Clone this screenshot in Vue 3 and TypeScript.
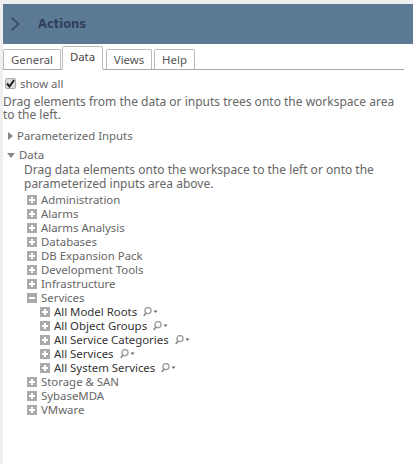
<script setup lang="ts">
const tabs = ['General', 'Data', 'Views', 'Help'];

type TreeNode = { label: string; open?: boolean; children?: string[] };

const nodes: TreeNode[] = [
  { label: 'Administration' },
  { label: 'Alarms' },
  { label: 'Alarms Analysis' },
  { label: 'Databases' },
  { label: 'DB Expansion Pack' },
  { label: 'Development Tools' },
  { label: 'Infrastructure' },
  {
    label: 'Services',
    open: true,
    children: ['All Model Roots', 'All Object Groups', 'All Service Categories', 'All Services', 'All System Services'],
  },
  { label: 'Storage & SAN' },
  { label: 'SybaseMDA' },
  { label: 'VMware' },
];
</script>

<template>
  <div class="panel">
    <header class="header">
      <svg class="chevron" width="12" height="16" viewBox="0 0 12 16">
        <path d="M2.5 1.5 L9.5 8 L2.5 14.5" fill="none" stroke="#2f3f52" stroke-width="1.3" />
      </svg>
      <span class="title">Actions</span>
    </header>

    <nav class="tabs">
      <button v-for="tab in tabs" :key="tab" :class="['tab', `tab--${tab.toLowerCase()}`]">{{ tab }}</button>
    </nav>

    <div class="body">
      <label class="show-all">
        <span class="check">
          <svg width="9" height="9" viewBox="0 0 9 9">
            <path d="M1 4.5 L3.5 7.5 L8 1.2" fill="none" stroke="#222" stroke-width="2" />
          </svg>
        </span>
        show all
      </label>
      <p class="hint">Drag elements from the data or inputs trees onto the workspace area to the left.</p>

      <div class="section section--closed">
        <span class="arrow arrow--right"></span>
        Parameterized Inputs
      </div>

      <div class="section">
        <span class="arrow arrow--down"></span>
        Data
      </div>
      <p class="hint hint--data">Drag data elements onto the workspace to the left or onto the parameterized inputs area above.</p>

      <ul class="tree">
        <li v-for="node in nodes" :key="node.label">
          <div class="row">
            <span class="toggle">
              <span class="toggle__h"></span>
              <span v-if="!node.open" class="toggle__v"></span>
            </span>
            {{ node.label }}
          </div>
          <ul v-if="node.children" class="tree tree--sub">
            <li v-for="child in node.children" :key="child" class="row row--child">
              <span class="toggle">
                <span class="toggle__h"></span>
                <span class="toggle__v"></span>
              </span>
              {{ child }}
              <svg class="search" width="15" height="10" viewBox="0 0 15 10">
                <circle cx="5" cy="3.6" r="3.1" fill="none" stroke="#a0a0a0" stroke-width="1.4" />
                <path d="M3 6 L0.8 9" stroke="#888" stroke-width="1.6" />
                <path d="M10.5 3.5 H14.5 L12.5 6 Z" fill="#666" />
              </svg>
            </li>
          </ul>
        </li>
      </ul>
    </div>
  </div>
</template>

<style>
html,
body {
  background: #fff;
}
</style>

<style scoped>
.panel {
  background: #fff;
  border-left: 3px solid #efefef;
  border-top: 4px solid #efefef;
  box-sizing: border-box;
  color: #666;
  font-family: 'Noto Sans', sans-serif;
  font-size: 11.4px;
  height: 464px;
  overflow: hidden;
  width: 413px;
}

.header {
  align-items: center;
  background: #5c7a96;
  display: flex;
  height: 40px;
  padding-left: 6px;
}

.chevron {
  margin-right: 17px;
}

.title {
  color: #2f3f58;
  font-family: 'DejaVu Sans', sans-serif;
  font-size: 11.5px;
  font-weight: 700;
}

.tabs {
  align-items: flex-end;
  border-bottom: 1px solid #a8a8a8;
  display: flex;
  height: 25px;
  margin-right: 9px;
}

.tab {
  background: #fff;
  border: 1px solid #bbb;
  border-bottom: 0;
  border-radius: 2px 2px 0 0;
  box-sizing: border-box;
  color: #555;
  font: inherit;
  height: 20px;
  padding: 0;
  text-align: center;
}

.tab--general {
  margin-left: 0;
  width: 58px;
}

.tab--data {
  border-bottom: 1px solid #fff;
  color: #444;
  height: 24px;
  margin: 0 3px -1px 1px;
  padding-bottom: 3px;
  width: 41px;
}

.tab--views {
  margin-right: 2px;
  width: 46px;
}

.tab--help {
  width: 41px;
}

.body {
  padding-top: 4px;
}

.show-all {
  align-items: center;
  display: flex;
  font-size: 11.4px;
  gap: 4px;
  height: 18px;
  padding-left: 2px;
}

.check {
  align-items: center;
  background: #ddd;
  border: 1px solid #aaa;
  border-radius: 2px;
  box-sizing: border-box;
  display: flex;
  height: 11px;
  justify-content: center;
  width: 11px;
}

.hint {
  font-size: 12px;
  line-height: 13px;
  margin: 3px 10px 0 0;
}

.section {
  align-items: center;
  display: flex;
  gap: 4px;
  height: 14px;
  line-height: 14px;
  padding-left: 5px;
}

.section--closed {
  margin: 8px 0 5px;
}

.arrow {
  display: block;
  height: 0;
  width: 0;
}

.arrow--right {
  border-bottom: 4px solid transparent;
  border-left: 5px solid #888;
  border-top: 4px solid transparent;
}

.arrow--down {
  border-left: 4px solid transparent;
  border-right: 4px solid transparent;
  border-top: 5px solid #888;
  margin-left: -1px;
}

.hint--data {
  line-height: 14px;
  margin: 1px 20px 2px 21px;
}

.tree {
  list-style: none;
  margin: 0;
  padding: 0 0 0 24px;
}

.tree--sub {
  padding-left: 13px;
}

.row {
  align-items: center;
  display: flex;
  gap: 4px;
  height: 14px;
  line-height: 14px;
}

.row--child {
  color: #333;
}

.toggle {
  background: #aaa;
  display: block;
  flex: none;
  height: 10px;
  position: relative;
  width: 10px;
}

.toggle__h,
.toggle__v {
  background: #fff;
  position: absolute;
}

.toggle__h {
  height: 2px;
  left: 2px;
  top: 4px;
  width: 6px;
}

.toggle__v {
  height: 6px;
  left: 4px;
  top: 2px;
  width: 2px;
}

.search {
  margin-left: 2px;
}
</style>
